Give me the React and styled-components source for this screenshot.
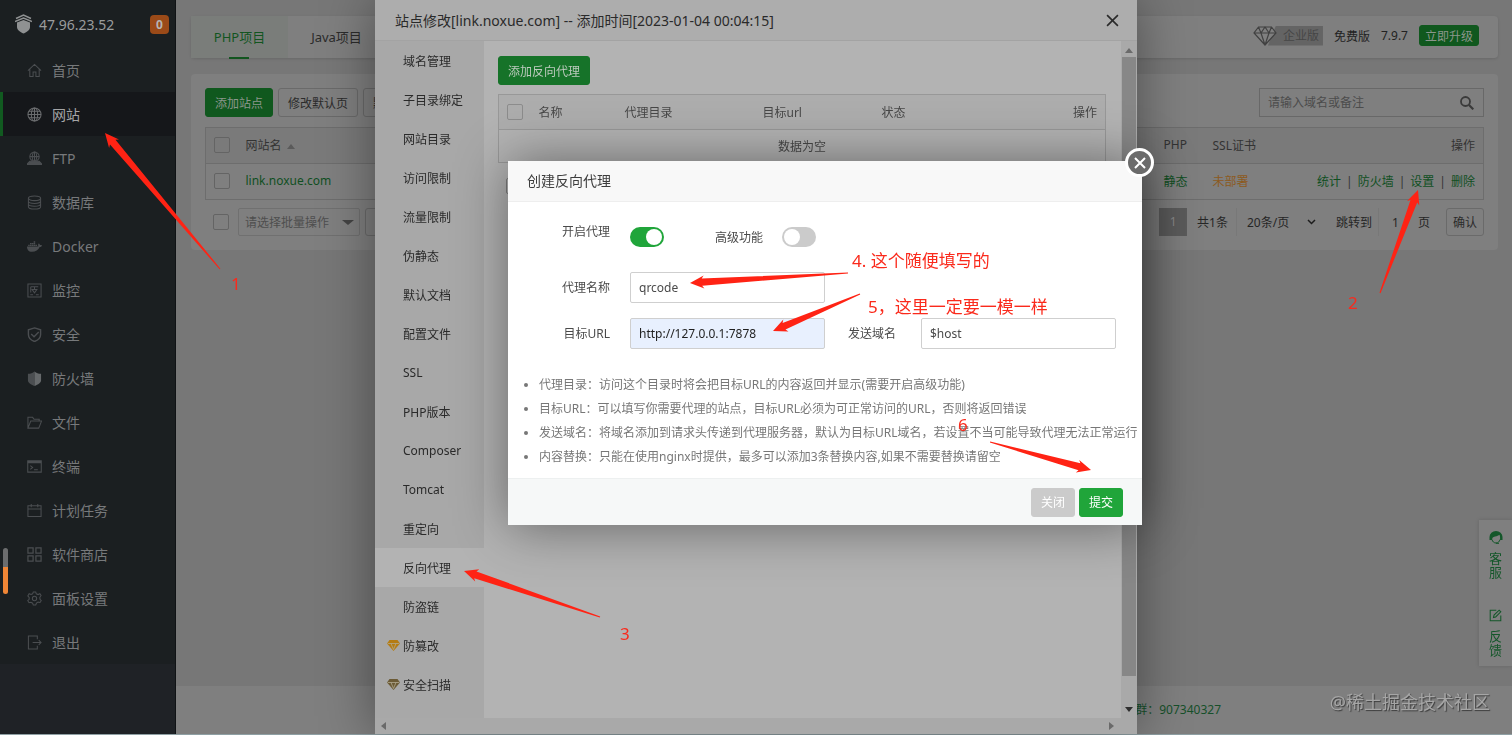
import React from "react";
import styled, { createGlobalStyle, css } from "styled-components";
import { FaDocker } from "react-icons/fa";

const GlobalStyle = createGlobalStyle`
  * {
    box-sizing: border-box;
  }

  body {
    margin: 0;
    background: #777777;
    color: #2b2b2b;
    font-size: 12px;
    font-family: "Noto Sans", "Noto Sans CJK SC", sans-serif;
    overflow: hidden;
  }

  button, input, select {
    font-family: inherit;
    font-size: 12px;
    color: inherit;
  }

  a {
    color: inherit;
    text-decoration: none;
  }

  ul {
    list-style: none;
    margin: 0;
    padding: 0;
  }
`;

const Page = styled.div`
  display: flex;
  height: 100vh;
  border-bottom: 1px solid #8fa0a4;
`;

/* ---------- sidebar ---------- */

const Sidebar = styled.aside`
  flex: 0 0 176px;
  position: relative;
  background: #1f2226;
  border-right: 1px solid #101315;
`;

const Brand = styled.header`
  height: 48px;
  padding: 0 6px 0 15px;
  display: flex;
  align-items: center;
  gap: 7px;
  background: #1b1f21;
  color: #9a9c9d;
  font-size: 14px;
`;

const Badge = styled.span`
  width: 19px;
  height: 19px;
  margin-left: auto;
  border-radius: 4px;
  background: #9b4a18;
  color: #b5b5b5;
  font-size: 12px;
  font-weight: 700;
  line-height: 19px;
  text-align: center;
`;

const Menu = styled.ul`
  background: #1b1f21;
`;

const MenuLink = styled.a`
  height: 44px;
  padding-left: 24px;
  display: flex;
  align-items: center;
  gap: 10px;
  border-left: 3px solid transparent;
  font-size: 14px;
  color: #77797b;

  svg {
    color: #4b4e51;
  }

  ${(props) =>
    props.$active &&
    css`
      border-left-color: #115a20;
      background: #15171a;
      color: #a4a5a6;

      svg {
        color: #6b6d6f;
      }
    `}
`;

const Meter = styled.div`
  position: absolute;
  left: 3px;
  top: 548px;
  width: 5px;
  height: 46px;
  border-radius: 3px;
  background: linear-gradient(#6c6d6e 19px, #f08636 19px);
`;

/* ---------- shared controls ---------- */

const Button = styled.button`
  height: 29px;
  padding: 0 9px;
  border: 1px solid ${(props) => props.$line || props.$bg || "#6a6a6a"};
  border-radius: 3px;
  background: ${(props) => props.$bg || "transparent"};
  color: ${(props) => props.$color || "#2b2b2b"};
  white-space: nowrap;
`;

const SmallButton = styled(Button)`
  height: 21px;
  padding: 0 5px;
`;

const PagerButton = styled(Button)`
  height: 28px;
  min-width: 38px;
  padding: 0 5px;
`;

const Check = styled.input`
  appearance: none;
  display: block;
  width: 16px;
  height: 16px;
  margin: 0;
  border: 1px solid ${(props) => props.$line || "#646464"};
  border-radius: 2px;
`;

/* ---------- site list ---------- */

const Main = styled.main`
  flex: 1;
  min-width: 0;
  display: flex;
  flex-direction: column;
  padding-top: 16px;
`;

const Card = styled.section`
  margin: 0 14px 16px 15px;
  border-radius: 4px;
  background: #7f7f7f;
`;

const TopBar = styled(Card)`
  display: flex;
  align-items: center;
  height: 42px;
  padding-right: 19px;
  box-shadow: 0 1px 3px rgba(0, 0, 0, 0.12);
`;

const Tab = styled.a`
  position: relative;
  width: 97px;
  height: 42px;
  line-height: 42px;
  text-align: center;
  font-size: 13px;
  color: ${(props) => (props.$active ? "#12551f" : "#2b2b2b")};
  background: ${(props) => (props.$active ? "#7a7d7a" : "transparent")};

  &::after {
    content: "";
    position: absolute;
    left: 38px;
    bottom: -1px;
    width: 20px;
    height: 2px;
    background: ${(props) => (props.$active ? "#12551f" : "transparent")};
  }
`;

const Version = styled.div`
  margin-left: auto;
  margin-bottom: 3px;
  display: flex;
  align-items: center;
  gap: 11px;
  color: #222222;
`;

const Enterprise = styled.span`
  display: flex;
  align-items: center;

  span {
    height: 20px;
    margin-left: -9px;
    padding: 0 4px 0 15px;
    line-height: 20px;
    background: #646464;
    color: #464646;
    clip-path: polygon(8px 0, 100% 0, 100% 100%, 0 100%);
  }

  svg {
    position: relative;
    z-index: 1;
  }
`;

const SiteCard = styled(Card)`
  padding: 14px;
`;

const Toolbar = styled.div`
  display: flex;
  gap: 5px;
  margin-bottom: 10px;
`;

const SearchBox = styled.label`
  width: 225px;
  height: 29px;
  margin-left: auto;
  padding: 0 9px 0 8px;
  display: flex;
  align-items: center;
  border: 1px solid #686868;

  input {
    flex: 1;
    min-width: 0;
    padding: 0;
    border: 0;
    background: transparent;
  }

  input::placeholder {
    color: #4c4c4c;
  }
`;

const SiteTable = styled.table`
  width: 100%;
  border-collapse: collapse;
  border: 1px solid #6d6d6d;
  table-layout: fixed;

  th,
  td {
    height: 36px;
    padding: 0 8px 2px;
    text-align: left;
    font-weight: 400;
  }

  tr {
    border-bottom: 1px solid #6d6d6d;
  }

  th {
    background: #7a7a7a;
    color: #333333;
  }

  td {
    color: #104f1f;
  }

  th:last-child,
  td:last-child {
    text-align: right;
    white-space: nowrap;
  }

  i {
    margin: 0 5px;
    font-style: normal;
    color: #333333;
  }
`;

const SortMark = styled.span`
  display: inline-block;
  margin: 0 0 1px 5px;
  border: 4px solid transparent;
  border-top: 0;
  border-bottom: 5px solid #5a5a5a;
`;

const SslLink = styled.a`
  color: #8c5a1d;
`;

const Pager = styled.div`
  display: flex;
  align-items: center;
  height: 28px;
  margin-top: 8px;
  padding-left: 8px;
  color: #262626;
`;

const BatchSelect = styled.div`
  width: 122px;
  height: 28px;
  margin: 0 5px 0 9px;
  padding: 0 5px 0 6px;
  display: flex;
  align-items: center;
  border: 1px solid #707070;
  border-radius: 2px;
  color: #4e4e4e;
`;

const BareSelect = styled.select`
  appearance: none;
  flex: 1;
  min-width: 0;
  padding: 0;
  border: 0;
  background: transparent;
`;

const PagerRight = styled.div`
  margin-left: auto;
  display: flex;
  align-items: center;
`;

const CurrentPage = styled.span`
  width: 28px;
  height: 28px;
  margin-right: 10px;
  line-height: 28px;
  text-align: center;
  background: #5c5c5c;
  color: #8a8a8a;
`;

const PageSize = styled.div`
  width: 88px;
  height: 28px;
  margin: 0 12px 0 8px;
  padding: 0 8px 0 10px;
  display: flex;
  align-items: center;
  border-left: 1px solid #787878;
`;

const JumpInput = styled.input`
  width: 34px;
  height: 28px;
  margin: 0 6px;
  padding: 0;
  border: 0;
  border-left: 1px solid #787878;
  background: transparent;
  text-align: center;
`;

const PageUnit = styled.span`
  margin-right: 16px;
`;

const Footer = styled.footer`
  height: 48px;
  margin-top: auto;
  padding-right: 291px;
  line-height: 48px;
  text-align: right;
  background: #7f7f7f;
  color: #16502a;
`;

const Support = styled.aside`
  position: fixed;
  right: 0;
  top: 520px;
  width: 33px;
  height: 146px;
  padding-top: 11px;
  display: flex;
  flex-direction: column;
  align-items: center;
  gap: 30px;
  background: #7f7f7f;
  box-shadow: 0 0 4px rgba(0, 0, 0, 0.15);
  color: #14572a;

  a {
    width: 13px;
    display: flex;
    flex-direction: column;
    align-items: center;
    gap: 7px;
    font-size: 13px;
    line-height: 14px;
    word-break: break-all;
  }
`;

/* ---------- site modal ---------- */

const SiteLayer = styled.div`
  position: fixed;
  inset: 0 0 1px;
  display: flex;
  justify-content: center;
`;

const SiteModal = styled.section`
  width: 762px;
  display: flex;
  flex-direction: column;
  background: #b3b3b3;
  box-shadow: 0 0 50px rgba(0, 0, 0, 0.4);
  color: #2a2a2a;
`;

const SiteHeader = styled.header`
  flex: 0 0 41px;
  padding: 0 18px 0 20px;
  display: flex;
  align-items: center;
  justify-content: space-between;
  background: #adadad;
  border-bottom: 1px solid #a3a3a3;
  font-size: 14px;
`;

const IconButton = styled.button`
  display: flex;
  padding: 0;
  border: 0;
  background: transparent;
`;

const SiteBody = styled.div`
  flex: 1;
  min-height: 0;
  display: flex;
`;

const SiteTabs = styled.ul`
  flex: 0 0 109px;
  background: #a8a8a8;
`;

const SiteTab = styled.a`
  position: relative;
  display: flex;
  align-items: center;
  height: 39px;
  padding-left: 28px;
  background: ${(props) => (props.$active ? "#b3b3b3" : "transparent")};

  svg {
    position: absolute;
    left: 12px;
    top: 14px;
  }
`;

const SitePanel = styled.div`
  flex: 1;
  min-width: 0;
  padding: 15px 15px 0 14px;
`;

const ProxyTable = styled.table`
  width: 100%;
  margin: 9px 0 15px;
  border-collapse: collapse;
  border: 1px solid #989898;
  table-layout: fixed;

  th,
  td {
    height: 35px;
    padding: 0 8px;
    font-weight: 400;
    text-align: left;
    color: #474747;
  }

  th {
    background: #adadad;
    border-bottom: 1px solid #989898;
  }

  th:last-child {
    text-align: right;
  }

  td {
    height: 33px;
    text-align: center;
  }
`;

const BatchRow = styled.div`
  padding-left: 8px;
`;

const ScrollY = styled.div`
  flex: 0 0 16px;
  display: flex;
  flex-direction: column;
  align-items: center;
  justify-content: space-between;
  padding: 7px 1px 6px;
  background: #a9a9a9;

  span {
    flex: 1;
    width: 100%;
    margin: 4px 0 31px;
    background: #878787;
  }
`;

const ScrollX = styled.div`
  flex: 0 0 16px;
  display: flex;
  align-items: center;
  justify-content: space-between;
  padding: 0 23px 0 6px;
  background: #a9a9a9;
`;

const Arrowhead = styled.i`
  border: ${(props) => props.$size || 4}px solid transparent;
  ${(props) => props.$side}-width: 0;
  ${(props) => props.$point}: 5px solid ${(props) => props.$color || "#6a6a6a"};
`;

/* ---------- proxy modal ---------- */

const ProxyModal = styled.form`
  position: fixed;
  left: calc(50% - 248px);
  top: 161px;
  width: 634px;
  background: #ffffff;
  box-shadow: 1px 1px 50px rgba(0, 0, 0, 0.45);
  color: #4a4a4a;
`;

const ProxyHeader = styled.header`
  height: 41px;
  padding-left: 19px;
  line-height: 40px;
  border-bottom: 1px solid #eeeeee;
  background: #f8f8f8;
  color: #3d3d3d;
  font-size: 14px;
`;

const RoundClose = styled.button`
  position: absolute;
  right: -12px;
  top: -13px;
  width: 29px;
  height: 29px;
  padding: 0;
  display: flex;
  align-items: center;
  justify-content: center;
  border: 3px solid #ffffff;
  border-radius: 50%;
  background: #6b6b6b;
  color: #ffffff;
`;

const Fields = styled.div`
  padding: 19px 26px 0 22px;
  display: flex;
  flex-direction: column;
  gap: 15px;
`;

const FieldRow = styled.div`
  display: flex;
  align-items: center;
  height: 31px;
`;

const SwitchRow = styled(FieldRow)`
  margin-bottom: 5px;
`;

const FieldLabel = styled.label`
  width: ${(props) => (props.$wide ? "80px" : "71px")};
  margin-right: ${(props) => (props.$wide ? "20px" : "25px")};
  line-height: 22px;
  text-align: right;
  white-space: nowrap;
  align-self: ${(props) => (props.$raised ? "flex-start" : "auto")};
`;

const SwitchLabel = styled.label`
  margin: 0 19px 0 51px;
`;

const TextInput = styled.input`
  width: 195px;
  height: 31px;
  padding: 0 8px;
  border: 1px solid #cfcfcf;
  border-radius: 2px;
  background: ${(props) => (props.$filled ? "#e8f0fe" : "#ffffff")};
  color: ${(props) => (props.$filled ? "#1f1f1f" : "#4a4a4a")};
`;

const Switch = styled.input`
  appearance: none;
  width: 34px;
  height: 20px;
  margin: 0;
  padding: 2px;
  display: flex;
  border-radius: 10px;
  background: #cbcbcb;

  &::before {
    content: "";
    width: 16px;
    height: 16px;
    border-radius: 50%;
    background: #ffffff;
  }

  &:checked {
    justify-content: flex-end;
    background: #20a53a;
  }
`;

const Hints = styled.ul`
  margin: 24px 0 0;
  padding: 0 0 9px 31px;
  list-style: disc;
  line-height: 24px;
  white-space: nowrap;
  color: #777777;
`;

const ProxyFooter = styled.footer`
  height: 47px;
  padding: 0 19px;
  display: flex;
  align-items: center;
  justify-content: flex-end;
  gap: 4px;
  border-top: 1px solid #edf0f0;
  background: #f6f8f8;
`;

/* ---------- annotations ---------- */

const ArrowLayer = styled.svg`
  position: fixed;
  left: 0;
  top: 0;
  pointer-events: none;
`;

const Note = styled.span`
  position: fixed;
  left: ${(props) => props.$x}px;
  top: ${(props) => props.$y}px;
  color: #fa2a1c;
  font-size: 17px;
  line-height: 20px;
  white-space: nowrap;
`;

const Watermark = styled.span`
  position: fixed;
  right: 22px;
  bottom: 20px;
  color: #a6a6a6;
  font-size: 18px;
  line-height: 26px;
  text-shadow: 1px 1px 1px #3c3c3c;
`;

const Icon = ({ size = 15, box = 16, children }) => (
  <svg
    width={size}
    height={size}
    viewBox={`0 0 ${box} ${box}`}
    fill="none"
    stroke="currentColor"
    strokeWidth="1.1"
    aria-hidden="true"
  >
    {children}
  </svg>
);

const MENU = [
  {
    name: "首页",
    icon: <path d="M1 8.2 8 1.5l7 6.7M3 6.5v8h3.500v-5h3v5H13v-8" />,
  },
  {
    name: "网站",
    active: true,
    icon: (
      <>
        <circle cx="8" cy="8" r="7" />
        <ellipse cx="8" cy="8" rx="3.4" ry="7" />
        <path d="M1 8h14M8 1v14M2 4.500h12M2 11.500h12" />
      </>
    ),
  },
  {
    name: "FTP",
    icon: (
      <>
        <circle cx="8" cy="6" r="5" />
        <ellipse cx="8" cy="6" rx="2.3" ry="5" />
        <path d="M3 6h10M8 1v10" />
        <path d="M.5 13.500 3 11h10l2.500 2.500v1H.5z" fill="currentColor" />
      </>
    ),
  },
  {
    name: "数据库",
    icon: (
      <>
        <ellipse cx="8" cy="3.5" rx="6.5" ry="2.5" />
        <path d="M1.500 3.500v9C1.500 14 4 15 8 15s6.500-1 6.500-2.500v-9M1.500 6.700C1.500 8 4 9 8 9s6.500-1 6.500-2.300M1.500 9.700C1.500 11 4 12 8 12s6.500-1 6.500-2.300" />
      </>
    ),
  },
  { name: "Docker", docker: true },
  {
    name: "监控",
    icon: (
      <path d="M1 1h14v14H1zM4 4h8M8 4v3M5.500 7h5L8 10.500zM3.500 12.500h3M9.500 12.500h3M4 4v6" />
    ),
  },
  {
    name: "安全",
    icon: (
      <path
        d="M8 1 14.500 3v5c0 3.500-2.500 6-6.500 7.500C4 14 1.500 11.500 1.500 8V3zM4.500 7.500l3 2.800 5-5"
        strokeWidth="1.5"
      />
    ),
  },
  {
    name: "防火墙",
    icon: (
      <>
        <path
          d="M8 .5C6 2 4 3 1 3v7c0 2.500 3 4 7 6z"
          fill="currentColor"
          stroke="none"
        />
        <path
          d="M8 .5C10 2 12 3 15 3v7c0 2.500-3 4-7 6z"
          fill="#66696b"
          stroke="none"
        />
      </>
    ),
  },
  {
    name: "文件",
    icon: <path d="M1 14V2.500h5l1.500 2H13v2M1 14l3-7.500h11.500L12.500 14z" />,
  },
  {
    name: "终端",
    icon: (
      <>
        <path d="M.8 2h14.400v12H.8zM3.500 7l2.500 2-2.500 2M7.500 11.500h4" />
        <path d="M.8 3.300h14.400" strokeWidth="2.5" />
      </>
    ),
  },
  {
    name: "计划任务",
    icon: <path d="M1 3h14v11.500H1zM1 6.500h14M4.500 1v3.500M11.500 1v3.500" />,
  },
  {
    name: "软件商店",
    icon: (
      <path
        d="M1 1h5.500v5.500H1zM9.500 1H15v5.500H9.500zM1 9.500h5.500V15H1zM9.500 9.500H15V15H9.500z"
        strokeWidth="1.3"
      />
    ),
  },
  {
    name: "面板设置",
    icon: (
      <>
        <path d="M6.700 1h2.600l.6 2 1.900.8 1.900-.9 1.300 2-1.300 1.800.2 2.100 1.300 1.500-1.300 2-2.100-.4-1.700 1.100L9.300 15H6.700L6 13l-1.800-1-2 .5-1.400-2.200L2.300 8.800V6.900L.9 5.200l1.400-2.300 2 .8L6 3z" />
        <circle cx="8" cy="8" r="2.3" />
      </>
    ),
  },
  {
    name: "退出",
    icon: <path d="M11 4.500V1H1.500v14H11v-3.500M6 8h9M12.500 5.500 15 8l-2.500 2.500" />,
  },
];

const SITE_TABS = [
  { name: "域名管理" },
  { name: "子目录绑定" },
  { name: "网站目录" },
  { name: "访问限制" },
  { name: "流量限制" },
  { name: "伪静态" },
  { name: "默认文档" },
  { name: "配置文件" },
  { name: "SSL" },
  { name: "PHP版本" },
  { name: "Composer" },
  { name: "Tomcat" },
  { name: "重定向" },
  { name: "反向代理", active: true },
  { name: "防盗链" },
  { name: "防篡改", gem: "#b57c12" },
  { name: "安全扫描", gem: "#6b5a35" },
];

const HINTS = [
  "代理目录：访问这个目录时将会把目标URL的内容返回并显示(需要开启高级功能)",
  "目标URL：可以填写你需要代理的站点，目标URL必须为可正常访问的URL，否则将返回错误",
  "发送域名：将域名添加到请求头传递到代理服务器，默认为目标URL域名，若设置不当可能导致代理无法正常运行",
  "内容替换：只能在使用nginx时提供，最多可以添加3条替换内容,如果不需要替换请留空",
];

const ARROWS = [
  { from: [220, 269], to: [105, 133] },
  { from: [1380, 293], to: [1418, 190] },
  { from: [600, 617], to: [464, 571] },
  { from: [848, 273], to: [690, 283] },
  { from: [860, 294], to: [773, 331] },
  { from: [990, 442], to: [1091, 470] },
];

const NOTES = [
  { x: 231, y: 274, text: "1" },
  { x: 1348, y: 293, text: "2" },
  { x: 620, y: 624, text: "3" },
  { x: 852, y: 251, text: "4. 这个随便填写的" },
  { x: 868, y: 297, text: "5，这里一定要一模一样" },
  { x: 958, y: 415, text: "6" },
];

// Tapered arrow: a point at the tail, widening up to the head.
const arrowPoints = ({ from, to }) => {
  const dx = from[0] - to[0];
  const dy = from[1] - to[1];
  const length = Math.hypot(dx, dy);
  const at = (along, side) => {
    const x = to[0] + (dx * along - dy * side) / length;
    const y = to[1] + (dy * along + dx * side) / length;
    return `${x.toFixed(1)},${y.toFixed(1)}`;
  };
  return [
    to.join(","),
    at(14, 6.5),
    at(12, 3.6),
    at(length, 0.5),
    at(length, -0.5),
    at(12, -3.6),
    at(14, -6.5),
  ].join(" ");
};

const Gem = ({ color }) => (
  <svg width="13" height="11" viewBox="0 0 13 11" aria-hidden="true">
    <path d="M2.500 0h8L13 3.500 6.500 11 0 3.500z" fill={color} />
    <path
      d="M.8 3.500h11.400M4 3.500l2.500 6 2.500-6"
      fill="none"
      stroke="#b0a88f"
      strokeWidth="0.8"
    />
  </svg>
);

const Cross = ({ size, weight }) => (
  <svg width={size} height={size} viewBox="0 0 12 12" aria-hidden="true">
    <path d="m1 1 10 10M11 1 1 11" stroke="currentColor" strokeWidth={weight} />
  </svg>
);

const SideMenu = () => (
  <Sidebar>
    <Brand>
      <svg width="17" height="20" viewBox="0 0 17 20" aria-hidden="true">
        <path
          d="M1 4.500 8.500 1 16 4.500M0 7.500 8.500 4 17 7.500"
          fill="none"
          stroke="#8f9192"
          strokeWidth="1.4"
        />
        <path
          d="M8.500 6 15 8.500v4.500c0 3-3 5-6.500 6.500C5 18 2 16 2 13V8.500z"
          fill="#8f9192"
        />
      </svg>
      <span>47.96.23.52</span>
      <Badge>0</Badge>
    </Brand>
    <Menu>
      {MENU.map((item) => (
        <li key={item.name}>
          <MenuLink href="#" $active={item.active}>
            {item.docker ? <FaDocker size={15} /> : <Icon>{item.icon}</Icon>}
            {item.name}
          </MenuLink>
        </li>
      ))}
    </Menu>
    <Meter />
  </Sidebar>
);

const SiteList = () => (
  <Main>
    <TopBar>
      <Tab href="#" $active>
        PHP项目
      </Tab>
      <Tab href="#">Java项目</Tab>
      <Version>
        <Enterprise>
          <svg width="24" height="20" viewBox="0 0 24 20" aria-hidden="true">
            <path
              d="M5.500 1h13L23 7 12 19 1 7zM1 7h22M5.500 1l2.500 6 4 12 4-12 2.500-6M8 7l4-6 4 6"
              fill="#7f7f7f"
              stroke="#414141"
              strokeWidth="1.2"
            />
          </svg>
          <span>企业版</span>
        </Enterprise>
        <span>免费版</span>
        <span>7.9.7</span>
        <SmallButton $bg="#10581e" $color="#8b968c">
          立即升级
        </SmallButton>
      </Version>
    </TopBar>
    <SiteCard>
      <Toolbar>
        <Button $bg="#10581e" $color="#8b968c">
          添加站点
        </Button>
        <Button>修改默认页</Button>
        <Button>默认站点</Button>
        <SearchBox>
          <input
            type="text"
            aria-label="搜索"
            placeholder="请输入域名或备注"
          />
          <svg width="14" height="14" viewBox="0 0 14 14" aria-hidden="true">
            <circle
              cx="5.5"
              cy="5.5"
              r="4.5"
              fill="none"
              stroke="#3a3a3a"
              strokeWidth="1.8"
            />
            <path d="m9 9 4.300 4.300" stroke="#3a3a3a" strokeWidth="2.2" />
          </svg>
        </SearchBox>
      </Toolbar>
      <SiteTable>
        <colgroup>
          <col width="32" />
          <col />
          <col width="49" />
          <col width="80" />
          <col width="199" />
        </colgroup>
        <thead>
          <tr>
            <th>
              <Check type="checkbox" aria-label="全选" />
            </th>
            <th>
              网站名
              <SortMark />
            </th>
            <th>PHP</th>
            <th>SSL证书</th>
            <th>操作</th>
          </tr>
        </thead>
        <tbody>
          <tr>
            <td>
              <Check type="checkbox" aria-label="link.noxue.com" />
            </td>
            <td>
              <a href="#">link.noxue.com</a>
            </td>
            <td>
              <a href="#">静态</a>
            </td>
            <td>
              <SslLink href="#">未部署</SslLink>
            </td>
            <td>
              <a href="#">统计</a>
              <i>|</i>
              <a href="#">防火墙</a>
              <i>|</i>
              <a href="#">设置</a>
              <i>|</i>
              <a href="#">删除</a>
            </td>
          </tr>
        </tbody>
      </SiteTable>
      <Pager>
        <Check type="checkbox" aria-label="批量选择" />
        <BatchSelect>
          <BareSelect aria-label="批量操作">
            <option>请选择批量操作</option>
          </BareSelect>
          <Arrowhead
            $size={6}
            $side="border-bottom"
            $point="border-top"
            $color="#444444"
          />
        </BatchSelect>
        <PagerButton aria-label="批量操作" />
        <PagerRight>
          <CurrentPage>1</CurrentPage>
          <span>共1条</span>
          <PageSize>
            <BareSelect aria-label="每页条数">
              <option>20条/页</option>
            </BareSelect>
            <svg width="9" height="6" viewBox="0 0 9 6" aria-hidden="true">
              <path
                d="m1 1 3.500 3.500L8 1"
                fill="none"
                stroke="#1c1c1c"
                strokeWidth="1.5"
              />
            </svg>
          </PageSize>
          <label htmlFor="jump">跳转到</label>
          <JumpInput id="jump" type="text" defaultValue="1" />
          <PageUnit>页</PageUnit>
          <PagerButton>确认</PagerButton>
        </PagerRight>
      </Pager>
    </SiteCard>
    <Footer>群：907340327</Footer>
  </Main>
);

const SiteDialog = () => (
  <SiteLayer>
    <SiteModal role="dialog" aria-label="站点修改">
      <SiteHeader>
        <span>站点修改[link.noxue.com] -- 添加时间[2023-01-04 00:04:15]</span>
        <IconButton type="button" aria-label="关闭">
          <Cross size={13} weight={1.5} />
        </IconButton>
      </SiteHeader>
      <SiteBody>
        <SiteTabs>
          {SITE_TABS.map((tab) => (
            <li key={tab.name}>
              <SiteTab href="#" $active={tab.active}>
                {tab.gem && <Gem color={tab.gem} />}
                {tab.name}
              </SiteTab>
            </li>
          ))}
        </SiteTabs>
        <SitePanel>
          <Button $bg="#167329" $color="#bccabd">
            添加反向代理
          </Button>
          <ProxyTable>
            <colgroup>
              <col width="32" />
              <col width="86" />
              <col width="138" />
              <col width="119" />
              <col />
              <col width="60" />
            </colgroup>
            <thead>
              <tr>
                <th>
                  <Check type="checkbox" aria-label="全选" $line="#8c8c8c" />
                </th>
                <th>名称</th>
                <th>代理目录</th>
                <th>目标url</th>
                <th>状态</th>
                <th>操作</th>
              </tr>
            </thead>
            <tbody>
              <tr>
                <td colSpan="6">数据为空</td>
              </tr>
            </tbody>
          </ProxyTable>
          <BatchRow>
            <Check type="checkbox" aria-label="批量选择" $line="#7c7c7c" />
          </BatchRow>
        </SitePanel>
        <ScrollY>
          <Arrowhead $side="border-top" $point="border-bottom" />
          <span />
          <Arrowhead $side="border-bottom" $point="border-top" $color="#2f2f2f" />
        </ScrollY>
      </SiteBody>
      <ScrollX>
        <Arrowhead $side="border-left" $point="border-right" />
        <Arrowhead $side="border-right" $point="border-left" />
      </ScrollX>
    </SiteModal>
  </SiteLayer>
);

const ProxyDialog = () => (
  <ProxyModal role="dialog" aria-label="创建反向代理">
    <ProxyHeader>创建反向代理</ProxyHeader>
    <RoundClose type="button" aria-label="关闭">
      <Cross size={12} weight={2} />
    </RoundClose>
    <Fields>
      <SwitchRow>
        <FieldLabel $wide $raised htmlFor="enabled">
          开启代理
        </FieldLabel>
        <Switch id="enabled" type="checkbox" defaultChecked />
        <SwitchLabel htmlFor="advanced">高级功能</SwitchLabel>
        <Switch id="advanced" type="checkbox" />
      </SwitchRow>
      <FieldRow>
        <FieldLabel $wide htmlFor="proxyName">
          代理名称
        </FieldLabel>
        <TextInput id="proxyName" type="text" defaultValue="qrcode" />
      </FieldRow>
      <FieldRow>
        <FieldLabel $wide htmlFor="target">
          目标URL
        </FieldLabel>
        <TextInput
          id="target"
          type="text"
          defaultValue="http://127.0.0.1:7878"
          $filled
        />
        <FieldLabel htmlFor="host">发送域名</FieldLabel>
        <TextInput id="host" type="text" defaultValue="$host" />
      </FieldRow>
    </Fields>
    <Hints>
      {HINTS.map((hint) => (
        <li key={hint}>{hint}</li>
      ))}
    </Hints>
    <ProxyFooter>
      <Button type="button" $bg="#cbcbcb" $color="#ffffff">
        关闭
      </Button>
      <Button type="button" $bg="#20a53a" $color="#ffffff">
        提交
      </Button>
    </ProxyFooter>
  </ProxyModal>
);

const App = () => (
  <>
    <GlobalStyle />
    <Page>
      <SideMenu />
      <SiteList />
    </Page>
    <Support>
      <a href="#">
        <svg width="14" height="13" viewBox="0 0 14 13" aria-hidden="true">
          <path
            d="M7 0a6.500 6 0 0 0-6.500 6v3h2.500c0-2 1-3.200 3-3.500 2-.2 3.500-.8 4.500-1.700.5 1 .8 3.200.5 5.200h2.500V6A6.500 6 0 0 0 7 0z"
            fill="currentColor"
          />
          <path
            d="M3 8.500c.5 2.200 2 3.500 4 3.500s3.500-1.300 4-3.500M7 12.300h3"
            fill="none"
            stroke="currentColor"
          />
        </svg>
        客服
      </a>
      <a href="#">
        <Icon size={13}>
          <path
            d="M9 1.500H1.500v13h13V8M5.500 10.500l.7-3L12.500 1.500l2 2-6.300 6.300z"
            strokeWidth="1.3"
          />
        </Icon>
        反馈
      </a>
    </Support>
    <SiteDialog />
    <ProxyDialog />
    <ArrowLayer width="1512" height="735" aria-hidden="true">
      {ARROWS.map((arrow) => (
        <polygon
          key={arrow.to.join()}
          points={arrowPoints(arrow)}
          fill="#ff2314"
        />
      ))}
    </ArrowLayer>
    {NOTES.map((note) => (
      <Note key={note.text} $x={note.x} $y={note.y}>
        {note.text}
      </Note>
    ))}
    <Watermark>@稀土掘金技术社区</Watermark>
  </>
);

export default App;
